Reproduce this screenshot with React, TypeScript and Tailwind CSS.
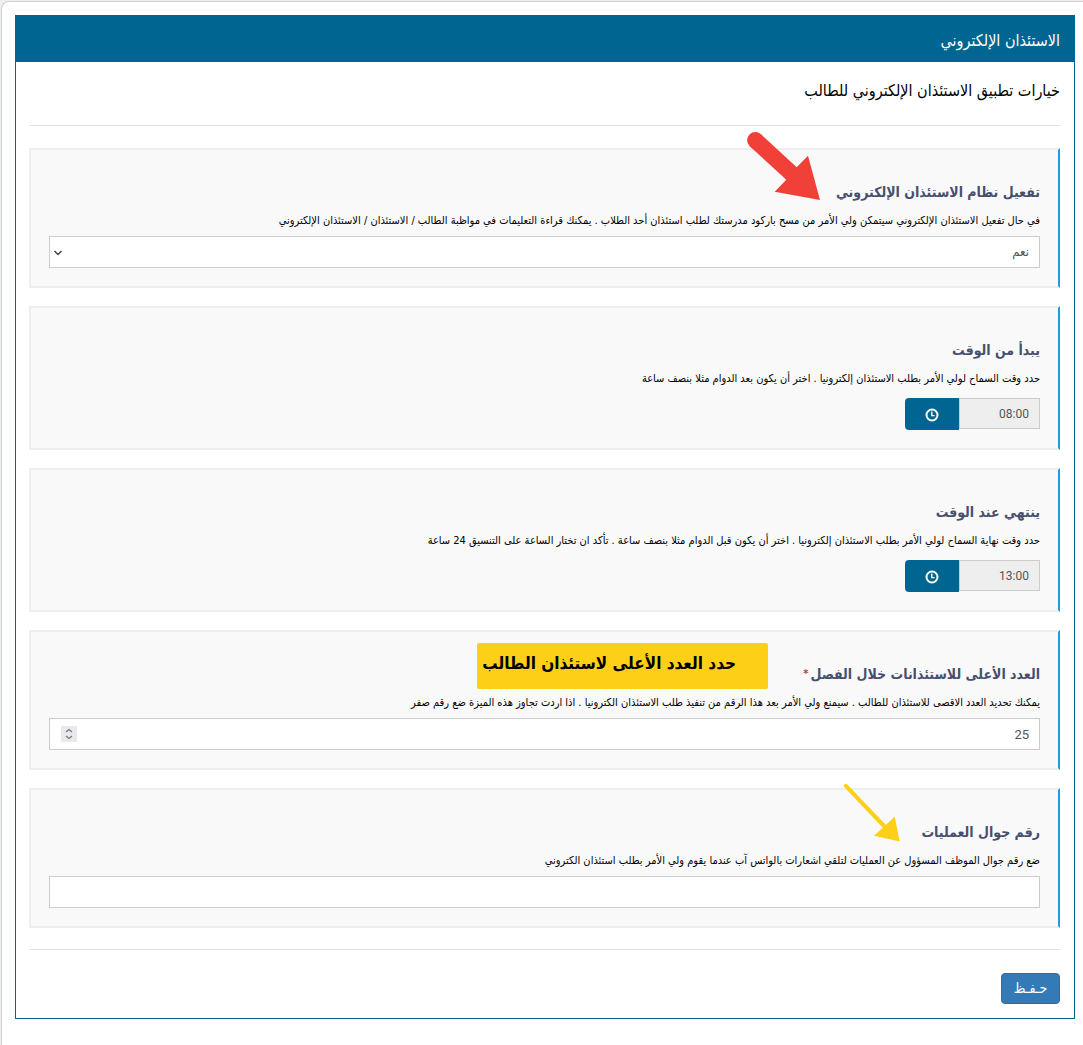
import type { ReactNode } from "react";

type CardProps = {
    id: string;
    title: string;
    hint: string;
    required?: boolean;
    note?: ReactNode;
    children: ReactNode;
};

function OptionCard({ id, title, hint, required, note, children }: CardProps) {
    return (
        <section className="relative border-2 border-[#eee] border-r-[#1e9fd6] bg-[#f9f9f9] px-[18px] pt-[30px] pb-[18px]">
            <label htmlFor={id} className="flex h-6 items-center gap-0.5 text-[14px] leading-6 font-bold text-[#474f6f]">
                {title}
                {required && <span className="text-[11px] text-[#b5403c]">*</span>}
            </label>
            <p className="mt-[7px] mb-[5px] text-[11px] leading-5 text-black">{hint}</p>
            {children}
            {note}
        </section>
    );
}

function TimeField({ id, value }: { id: string; value: string }) {
    return (
        <div className="flex items-start pt-1">
            <input
                id={id}
                readOnly
                defaultValue={value}
                className="h-[31px] w-[81px] border border-[#ccc] bg-[#eee] px-2.5 font-[Roboto,sans-serif] text-[12px] text-[#555] outline-none"
            />
            <button
                type="button"
                aria-label="اختيار الوقت"
                className="flex h-8 w-[54px] items-center justify-center rounded-l bg-[#006691] pt-0.5 text-white"
            >
                <svg width="14" height="14" viewBox="0 0 14 14" fill="none" stroke="currentColor" strokeWidth="2">
                    <circle cx="7" cy="7" r="5.5" />
                    <path d="M6.8 3.5V7.6H9.6" strokeWidth="1.4" />
                </svg>
            </button>
        </div>
    );
}

function RedArrow() {
    return (
        <svg className="absolute -top-5 right-[236px]" width="76" height="72" viewBox="746 130 76 72" fill="#f04037" aria-hidden="true">
            <circle cx="755.3" cy="140.2" r="8.2" />
            <path d="M761 134.3 796.7 167.3 808 155.7 820 200 774.7 191.7 786.3 179.7 749.7 146.3Z" />
        </svg>
    );
}

function YellowArrow() {
    return (
        <svg className="absolute -top-2 right-[156px]" width="60" height="62" viewBox="842 782 60 62" aria-hidden="true">
            <path d="M845.8 785.8 885 827" stroke="#fdd017" strokeWidth="4" strokeLinecap="round" />
            <path d="M894.7 816.7 899.7 841.5 874 835.7Z" fill="#fdd017" />
        </svg>
    );
}

const inputClass = "block h-8 w-full border border-[#ccc] bg-white px-2.5 text-[13px] text-[#555] outline-none";

export default function App() {
    return (
        <div dir="rtl" className="min-h-screen bg-[#efefef] pt-px pl-px font-['DejaVu_Sans_Condensed','DejaVu_Sans',sans-serif]">
            <main className="min-h-[1044px] rounded-tl-lg border-t border-l border-[#d0d0d0] bg-white pt-[13px] pr-2 pl-[13px]">
                <form className="border border-[#006691]">
                    <h1 className="bg-[#006691] px-3.5 pt-3.5 pb-2.5 text-[16px] leading-[22px] text-white">الاستئذان الإلكتروني</h1>
                    <div className="pt-[17px] pr-3.5 pb-3.5 pl-[13px]">
                        <h2 className="text-[16px] leading-6 text-black">خيارات تطبيق الاستئذان الإلكتروني للطالب</h2>
                        <hr className="my-[22px] border-[#e2e2e2]" />
                        <div className="flex flex-col gap-[18px]">
                            <OptionCard
                                id="enabled"
                                title="تفعيل نظام الاستئذان الإلكتروني"
                                hint="في حال تفعيل الاستئذان الإلكتروني سيتمكن ولي الأمر من مسح باركود مدرستك لطلب استئذان أحد الطلاب . يمكنك قراءة التعليمات في مواظبة الطالب / الاستئذان / الاستئذان الإلكتروني"
                                note={<RedArrow />}
                            >
                                <div className="relative">
                                    <select id="enabled" className={inputClass + " appearance-none"}>
                                        <option>نعم</option>
                                        <option>لا</option>
                                    </select>
                                    <svg className="pointer-events-none absolute top-3 left-1" width="10" height="10" viewBox="0 0 10 10" fill="none" stroke="#444" strokeWidth="1.5">
                                        <path d="M1.5 3 5 6.5 8.5 3" />
                                    </svg>
                                </div>
                            </OptionCard>
                            <OptionCard
                                id="start"
                                title="يبدأ من الوقت"
                                hint="حدد وقت السماح لولي الأمر بطلب الاستئذان إلكترونيا . اختر أن يكون بعد الدوام مثلا بنصف ساعة"
                            >
                                <TimeField id="start" value="08:00" />
                            </OptionCard>
                            <OptionCard
                                id="end"
                                title="ينتهي عند الوقت"
                                hint="حدد وقت نهاية السماح لولي الأمر بطلب الاستئذان إلكترونيا . اختر أن يكون قبل الدوام مثلا بنصف ساعة . تأكد ان تختار الساعة على التنسيق 24 ساعة"
                            >
                                <TimeField id="end" value="13:00" />
                            </OptionCard>
                            <OptionCard
                                id="limit"
                                title="العدد الأعلى للاستئذانات خلال الفصل"
                                required
                                hint="يمكنك تحديد العدد الاقصى للاستئذان للطالب . سيمنع ولي الأمر بعد هذا الرقم من تنفيذ طلب الاستئذان الكترونيا . اذا اردت تجاوز هذه الميزة ضع رقم صفر"
                                note={
                                    <div className="absolute top-[11px] right-[290px] h-[46px] w-[291px] rounded-xs bg-[#fdd017] pr-8 text-[17px] leading-10 font-bold whitespace-nowrap text-black">
                                        حدد العدد الأعلى لاستئذان الطالب
                                    </div>
                                }
                            >
                                <div className="relative font-[Roboto,sans-serif]">
                                    <input id="limit" type="number" defaultValue={25} className={inputClass + " [appearance:textfield]"} />
                                    <svg className="absolute top-2 left-3 bg-[#e9e9ed]" width="16" height="16" viewBox="0 0 16 16" fill="none" stroke="#777" strokeWidth="1.3">
                                        <path d="M5 6 8 3.5 11 6M5 10 8 12.5 11 10" />
                                    </svg>
                                </div>
                            </OptionCard>
                            <OptionCard
                                id="phone"
                                title="رقم جوال العمليات"
                                hint="ضع رقم جوال الموظف المسؤول عن العمليات لتلقي اشعارات بالواتس آب عندما يقوم ولي الأمر بطلب استئذان الكتروني"
                                note={<YellowArrow />}
                            >
                                <input id="phone" type="tel" className={inputClass} />
                            </OptionCard>
                        </div>
                        <hr className="mt-[21px] mb-[23px] border-[#e2e2e2]" />
                        <button type="submit" className="block h-[31px] w-[59px] rounded border border-[#2e6da4] bg-[#337ab7] text-[14px] text-white">
                            حـفـظ
                        </button>
                    </div>
                </form>
            </main>
        </div>
    );
}
